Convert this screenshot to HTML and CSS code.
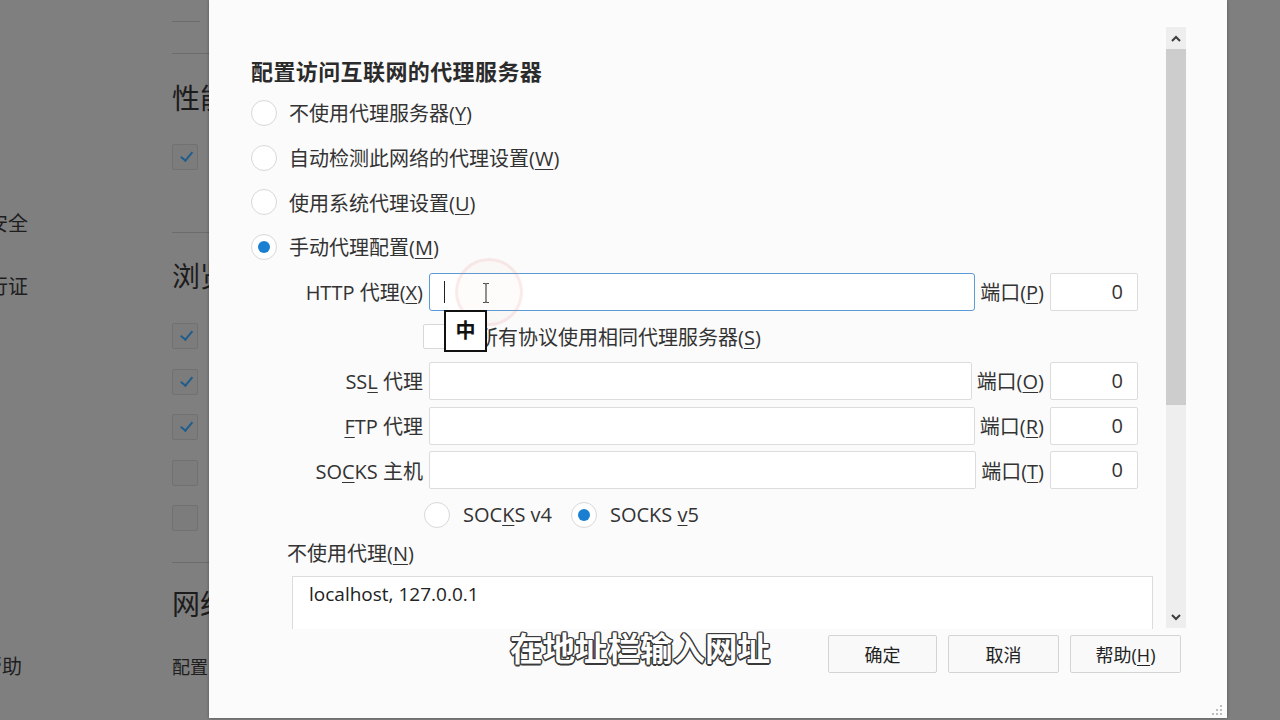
FILE: index.html
```html
<!DOCTYPE html>
<html lang="zh-CN">
<head>
    <meta charset="UTF-8">
    <title>连接设置</title>
    <link rel="stylesheet" href="styles.css">
</head>
<body>
    <div class="page">
        <aside class="side">
            <div class="side-item s1"><span>隐私与安全</span></div>
            <div class="side-item s2"><span>通行证</span></div>
            <div class="side-item s3"><span>Firefox 帮助</span></div>
        </aside>
        <main class="prefs">
            <div class="rule short"></div>
            <div class="rule r1"></div>
            <h2 class="pref-h h1">性能</h2>
            <div class="pref-check on c0"></div>
            <div class="rule r2"></div>
            <h2 class="pref-h h2">浏览</h2>
            <div class="pref-check on c1"></div>
            <div class="pref-check on"></div>
            <div class="pref-check on"></div>
            <div class="pref-check"></div>
            <div class="pref-check"></div>
            <div class="rule r3"></div>
            <h2 class="pref-h h3">网络</h2>
            <p class="pref-text">配置</p>
        </main>
    </div>

    <div class="dialog">
        <div class="dlg-body">
            <div class="pane">
                <h1 class="title">配置访问互联网的代理服务器</h1>

                <div class="opt"><span class="radio"></span><span>不使用代理服务器(<u>Y</u>)</span></div>
                <div class="opt"><span class="radio"></span><span>自动检测此网络的代理设置(<u>W</u>)</span></div>
                <div class="opt"><span class="radio"></span><span>使用系统代理设置(<u>U</u>)</span></div>
                <div class="opt"><span class="radio checked"></span><span>手动代理配置(<u>M</u>)</span></div>

                <div class="prow">
                    <span class="plabel">HTTP 代理(<u>X</u>)</span>
                    <div class="field focus"><span class="caret"></span></div>
                    <span class="port-label">端口(<u>P</u>)</span>
                    <div class="port">0</div>
                </div>
                <div class="crow">
                    <span class="box"></span>
                    <span>为所有协议使用相同代理服务器(<u>S</u>)</span>
                </div>
                <div class="prow">
                    <span class="plabel">SS<u>L</u> 代理</span>
                    <div class="field"></div>
                    <span class="port-label">端口(<u>O</u>)</span>
                    <div class="port">0</div>
                </div>
                <div class="prow">
                    <span class="plabel"><u>F</u>TP 代理</span>
                    <div class="field"></div>
                    <span class="port-label">端口(<u>R</u>)</span>
                    <div class="port">0</div>
                </div>
                <div class="prow">
                    <span class="plabel">SO<u>C</u>KS 主机</span>
                    <div class="field"></div>
                    <span class="port-label">端口(<u>T</u>)</span>
                    <div class="port">0</div>
                </div>
                <div class="vrow">
                    <span class="radio"></span><span class="vtext">SOC<u>K</u>S v4</span>
                    <span class="radio checked"></span><span>SOCKS <u>v</u>5</span>
                </div>

                <div class="nolabel">不使用代理(<u>N</u>)</div>
                <div class="textarea">localhost, 127.0.0.1</div>
            </div>
            <div class="vscroll">
                <div class="sbtn">
                    <svg width="10" height="7" viewBox="0 0 10 7"><polyline points="1,6 5,2 9,6" fill="none" stroke="#3c3c3c" stroke-width="2"/></svg>
                </div>
                <div class="thumb"></div>
                <div class="track"></div>
                <div class="sbtn">
                    <svg width="10" height="7" viewBox="0 0 10 7"><polyline points="1,1 5,5 9,1" fill="none" stroke="#3c3c3c" stroke-width="2"/></svg>
                </div>
            </div>
        </div>
        <div class="dlg-foot">
            <button class="btn ok">确定</button>
            <button class="btn">取消</button>
            <button class="btn">帮助(<u>H</u>)</button>
        </div>
        <svg class="grip" width="10" height="10" viewBox="0 0 10 10">
            <rect x="8" y="0" width="2" height="2" fill="#bdbdbd"/>
            <rect x="4" y="4" width="2" height="2" fill="#bdbdbd"/>
            <rect x="8" y="4" width="2" height="2" fill="#bdbdbd"/>
            <rect x="0" y="8" width="2" height="2" fill="#bdbdbd"/>
            <rect x="4" y="8" width="2" height="2" fill="#bdbdbd"/>
            <rect x="8" y="8" width="2" height="2" fill="#bdbdbd"/>
        </svg>
    </div>

    <div class="click-ring"></div>
    <svg class="ibeam" width="10" height="22" viewBox="0 0 10 22">
        <path d="M2 1.5 H4 Q5 1.5 5 3 V19 Q5 20.5 4 20.5 H2 M8 1.5 H6 Q5 1.5 5 3 M5 19 Q5 20.5 6 20.5 H8" fill="none" stroke="#4a4a4a" stroke-width="1.2"/>
    </svg>
    <div class="ime">中</div>
    <div class="subtitle">在地址栏输入网址</div>
</body>
</html>
```

FILE: styles.css
```css
body {
    margin: 0;
    width: 1280px;
    height: 720px;
    overflow: hidden;
    background-color: #7f7f7f;
    font-family: "Open Sans", "Noto Sans CJK SC", sans-serif;
    color: #1e1e1e;
    position: relative;
}
u {
    text-decoration-thickness: 1px;
    text-underline-offset: 3px;
}

/* settings page behind the dialog */
.page {
    display: flex;
    height: 720px;
}
.side {
    width: 28px;
    display: flex;
    flex-direction: column;
}
.side-item {
    display: flex;
    justify-content: flex-end;
    white-space: nowrap;
    font-size: 20px;
    line-height: 28px;
}
.s1 { margin-top: 210px; }
.s2 { margin-top: 35px; }
.s3 { margin-top: 352px; padding-right: 6px; }
.prefs {
    margin-left: 144px;
    width: 200px;
    display: flex;
    flex-direction: column;
}
.rule {
    height: 1px;
    background-color: #6c6c6c;
}
.rule.short { margin-top: 21px; width: 28px; }
.r1 { margin-top: 31px; }
.r2 { margin-top: 62px; }
.r3 { margin-top: 31px; }
.pref-h {
    margin: 0;
    font-size: 28px;
    font-weight: 400;
    line-height: 40px;
    color: #1c1c1c;
}
.h1 { margin-top: 24px; }
.h2 { margin-top: 23px; }
.h3 { margin-top: 21px; }
.pref-check {
    width: 24px;
    height: 24px;
    border: 1px solid #717171;
    border-radius: 2px;
    background-color: #7c7c7c;
    margin-top: 19.5px;
    position: relative;
}
.pref-check.c0 { margin-top: 26px; }
.pref-check.c1 { margin-top: 27px; }
.pref-check.on::after {
    content: "";
    position: absolute;
    left: 6px;
    top: 4px;
    width: 10px;
    height: 5px;
    border-left: 2.5px solid #1f5d8c;
    border-bottom: 2.5px solid #1f5d8c;
    transform: rotate(-50deg) translate(-1px, 3px);
}
.pref-text {
    margin: 30px 0 0;
    font-size: 18px;
    line-height: 26px;
}

/* dialog */
.dialog {
    position: absolute;
    left: 209px;
    top: 0;
    width: 1018px;
    height: 718px;
    background-color: #fbfbfb;
    box-shadow: 0 0 3px rgba(0, 0, 0, 0.35);
    color: #333;
    font-size: 20px;
}
.dlg-body {
    display: flex;
    height: 629px;
}
.pane {
    flex: 1;
    padding: 56px 28px 0 42px;
    overflow: hidden;
}
.title {
    margin: 0 0 4.67px;
    font-size: 22px;
    font-weight: 700;
    letter-spacing: 0.4px;
    line-height: 30px;
    color: #2b2b2b;
}
.opt {
    height: 44.67px;
    display: flex;
    align-items: center;
    gap: 12px;
}
.radio {
    width: 24px;
    height: 24px;
    border: 1px solid #d8d8d8;
    border-radius: 50%;
    background-color: #fff;
    flex: none;
    display: flex;
    align-items: center;
    justify-content: center;
}
.radio.checked::after {
    content: "";
    width: 12px;
    height: 12px;
    border-radius: 50%;
    background-color: #1a7fd0;
}
.prow {
    height: 44.67px;
    display: flex;
    align-items: center;
}
.plabel {
    width: 172px;
    text-align: right;
    white-space: nowrap;
}
.field {
    flex: 1;
    height: 36px;
    margin-left: 6px;
    border: 1px solid #dcdcdc;
    border-radius: 2px;
    background-color: #fff;
    display: flex;
    align-items: center;
    padding-left: 14px;
}
.field.focus {
    border-color: #5b9bd5;
    border-radius: 3px;
}
.caret {
    width: 1px;
    height: 22px;
    background-color: #222;
}
.port-label {
    margin: 0 6px 0 5px;
    white-space: nowrap;
}
.port {
    width: 72px;
    height: 36px;
    border: 1px solid #dcdcdc;
    border-radius: 2px;
    background-color: #fff;
    padding-right: 14px;
    text-align: right;
    line-height: 36px;
}
.crow {
    height: 44.67px;
    display: flex;
    align-items: center;
    gap: 10px;
    margin-left: 172px;
}
.box {
    width: 23px;
    height: 23px;
    border: 1px solid #d8d8d8;
    border-radius: 2px;
    background-color: #fff;
}
.vrow {
    height: 44.67px;
    display: flex;
    align-items: center;
    gap: 13px;
    margin-left: 173px;
}
.vtext {
    margin-right: 6px;
}
.nolabel {
    margin: 0 0 5px 36px;
    line-height: 34px;
}
.textarea {
    margin: 0 -15px 0 41px;
    height: 80px;
    border: 1px solid #dcdcdc;
    background-color: #fff;
    padding: 4px 16px;
    font-size: 19px;
    line-height: 26px;
    color: #222;
}

/* scrollbar */
.vscroll {
    width: 20px;
    margin: 27px 41px 1px 0;
    display: flex;
    flex-direction: column;
    background-color: #eeeeee;
}
.sbtn {
    height: 22px;
    display: flex;
    align-items: center;
    justify-content: center;
}
.thumb {
    height: 356px;
    background-color: #cdcdcd;
}
.track {
    flex: 1;
}

.dlg-foot {
    display: flex;
    justify-content: flex-end;
    gap: 11px;
    padding: 6px 46px 0 0;
}
.btn {
    width: 111px;
    height: 38px;
    border: 1px solid #d4d4d4;
    border-radius: 2px;
    background-color: #f9f9f9;
    font-family: "Open Sans", "Noto Sans CJK SC", sans-serif;
    font-size: 18px;
    color: #222;
}
.btn.ok {
    width: 109px;
}
.grip {
    position: absolute;
    right: 5px;
    bottom: 3px;
}

/* overlays from the screen recording */
.click-ring {
    position: absolute;
    left: 455px;
    top: 258px;
    width: 62px;
    height: 62px;
    border: 3px solid rgba(230, 110, 110, 0.12);
    border-radius: 50%;
    background-color: rgba(240, 160, 160, 0.04);
}
.ibeam {
    position: absolute;
    left: 481px;
    top: 282px;
}
.ime {
    position: absolute;
    left: 444px;
    top: 310px;
    width: 39px;
    height: 38px;
    border: 2px solid #111;
    background-color: #fff;
    color: #111;
    font-size: 20px;
    font-weight: 700;
    line-height: 38px;
    text-align: center;
}
.subtitle {
    position: absolute;
    left: 510px;
    top: 628px;
    font-family: "Noto Sans CJK SC", sans-serif;
    font-size: 32.5px;
    font-weight: 700;
    line-height: 38px;
    color: #fff;
    text-shadow: -1.5px 0 #3a3a3a, 1.5px 0 #3a3a3a, 0 -1.5px #3a3a3a, 0 1.5px #3a3a3a,
        -1px -1px #3a3a3a, 1px 1px #3a3a3a, -1px 1px #3a3a3a, 1px -1px #3a3a3a;
}
```
